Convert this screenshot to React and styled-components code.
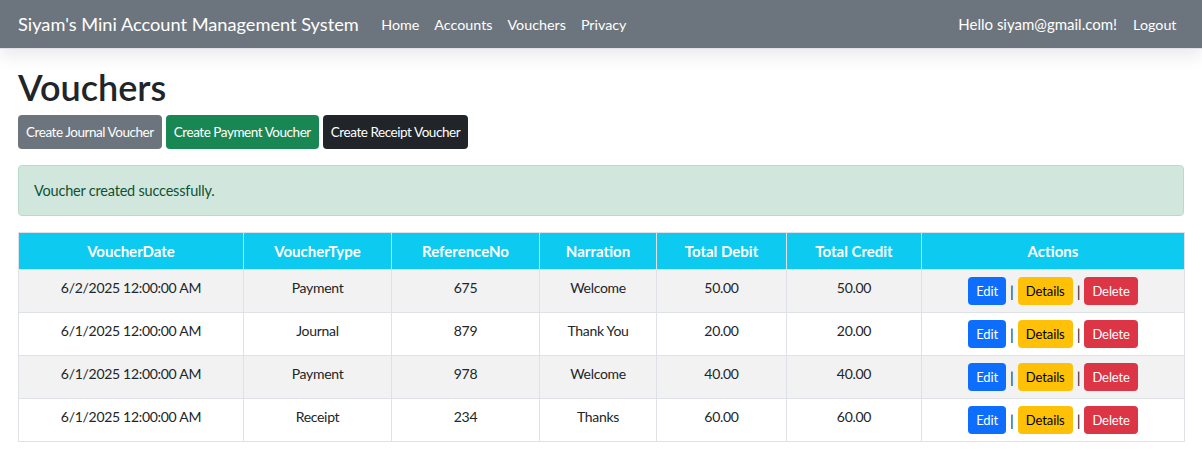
import React from "react";
import styled, { createGlobalStyle } from "styled-components";

const Global = createGlobalStyle`
  html, body { margin: 0; padding: 0; background: #fff; }
  body {
    font-family: Lato, "Noto Sans", "Liberation Sans", sans-serif;
    color: #212529;
    font-size: 15px;
  }
  * { box-sizing: border-box; }
`;

const NavBar = styled.header`
  height: 49px;
  background: #6c757d;
  border-bottom: 1px solid #dee2e6;
  box-shadow: 0 8px 16px rgba(0, 0, 0, 0.08);
  display: flex;
  align-items: center;
  padding: 0 18px;
  color: #fff;
`;

const Brand = styled.a`
  font-size: 18.2px;
  color: #fff;
  margin-right: 15px;
  white-space: nowrap;
`;

const NavList = styled.nav`
  display: flex;
  align-items: center;
  flex: ${(p) => (p.$grow ? 1 : "none")};
`;

const NavLink = styled.a`
  font-size: 14.3px;
  color: #fff;
  padding: 0 7.5px;
  white-space: nowrap;
`;

const Greeting = styled(NavLink)`
  font-size: 15px;
  padding-right: 8.5px;
`;

const Main = styled.main`
  padding: 16px 18px 0;
`;

const Title = styled.h1`
  margin: 0 0 6px;
  font-size: 36px;
  font-weight: 600;
  line-height: 44px;
  color: #212529;
`;

const ButtonRow = styled.div`
  display: flex;
  gap: 4px;
  margin-bottom: 16px;
`;

const Btn = styled.a`
  display: inline-flex;
  align-items: center;
  height: ${(p) => (p.$small ? "28px" : "34px")};
  padding: 0 8px;
  font-size: ${(p) => (p.$small ? "13px" : "13.5px")};
  letter-spacing: ${(p) => (p.$small ? "-0.1px" : "-0.45px")};
  border-radius: 4px;
  background: ${(p) => p.$bg};
  color: ${(p) => p.$fg || "#fff"};
  white-space: nowrap;
`;

const Alert = styled.div`
  background: #d1e7dd;
  border: 1px solid #badbcc;
  color: #0f5132;
  border-radius: 4px;
  padding: 14px 15px;
  font-size: 14.5px;
  letter-spacing: -0.2px;
  line-height: 21px;
  margin-bottom: 16px;
`;

const Table = styled.table`
  width: 100%;
  border-collapse: collapse;
  table-layout: fixed;
`;

const Col = styled.col`
  width: ${(p) => p.$w}px;
`;

const Th = styled.th`
  background: #0dcaf0;
  color: #fff;
  font-weight: 700;
  height: 37px;
  padding: 0 8px;
  border: 1px solid #dee2e6;
  text-align: center;
  font-size: 15px;
`;

const Tr = styled.tr`
  background: ${(p) => (p.$striped ? "#f2f2f2" : "#fff")};
`;

const Td = styled.td`
  height: 43px;
  padding: 0 8px 7px;
  border: 1px solid #dee2e6;
  text-align: center;
  color: #212529;
  font-size: 14px;
  letter-spacing: -0.3px;
`;

const ActionTd = styled(Td)`
  padding: 0 8px;
  letter-spacing: normal;
`;

const Actions = styled.div`
  display: flex;
  justify-content: center;
  align-items: center;
  gap: 4px;
`;

const Sep = styled.span`
  color: #212529;
  font-size: 15px;
`;

const rows = [
  ["6/2/2025 12:00:00 AM", "Payment", "675", "Welcome", "50.00", "50.00"],
  ["6/1/2025 12:00:00 AM", "Journal", "879", "Thank You", "20.00", "20.00"],
  ["6/1/2025 12:00:00 AM", "Payment", "978", "Welcome", "40.00", "40.00"],
  ["6/1/2025 12:00:00 AM", "Receipt", "234", "Thanks", "60.00", "60.00"],
];

const widths = [225, 148, 148, 117, 130, 135, 263];
const headers = ["VoucherDate", "VoucherType", "ReferenceNo", "Narration", "Total Debit", "Total Credit", "Actions"];

export default function App() {
  return (
    <>
      <Global />
      <NavBar>
        <Brand>Siyam's Mini Account Management System</Brand>
        <NavList $grow>
          <NavLink>Home</NavLink>
          <NavLink>Accounts</NavLink>
          <NavLink>Vouchers</NavLink>
          <NavLink>Privacy</NavLink>
        </NavList>
        <NavList>
          <Greeting>Hello siyam@gmail.com!</Greeting>
          <NavLink>Logout</NavLink>
        </NavList>
      </NavBar>
      <Main>
        <Title>Vouchers</Title>
        <ButtonRow>
          <Btn $bg="#6c757d">Create Journal Voucher</Btn>
          <Btn $bg="#198754">Create Payment Voucher</Btn>
          <Btn $bg="#212529">Create Receipt Voucher</Btn>
        </ButtonRow>
        <Alert>Voucher created successfully.</Alert>
        <Table>
          <colgroup>
            {widths.map((w, i) => (
              <Col key={i} $w={w} />
            ))}
          </colgroup>
          <thead>
            <tr>
              {headers.map((h) => (
                <Th key={h}>{h}</Th>
              ))}
            </tr>
          </thead>
          <tbody>
            {rows.map((r, i) => (
              <Tr key={i} $striped={i % 2 === 0}>
                {r.map((c, j) => (
                  <Td key={j}>{c}</Td>
                ))}
                <ActionTd>
                  <Actions>
                    <Btn $small $bg="#0d6efd">Edit</Btn>
                    <Sep>|</Sep>
                    <Btn $small $bg="#ffc107" $fg="#000">Details</Btn>
                    <Sep>|</Sep>
                    <Btn $small $bg="#dc3545">Delete</Btn>
                  </Actions>
                </ActionTd>
              </Tr>
            ))}
          </tbody>
        </Table>
      </Main>
    </>
  );
}
